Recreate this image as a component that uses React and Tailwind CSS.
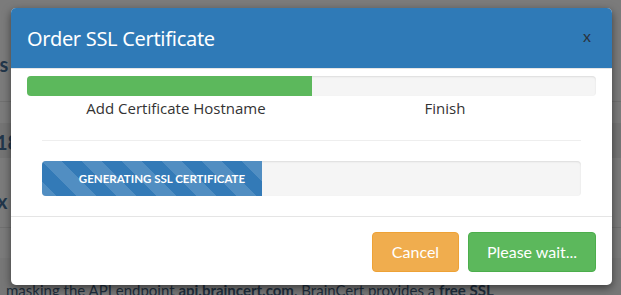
export default function App() {
  return (
    <div className="relative w-[621px] h-[295px] overflow-hidden bg-[#7b7b7b] font-['Lato','Liberation_Sans',sans-serif]">
      {/* page behind the overlay */}
      <div className="flex flex-col text-[#22364a] text-[20px] font-bold leading-none">
        <div className="h-[50px]" />
        <div className="h-[52px] border-b border-[#707070] pt-[4px] -ml-[20px]">ses</div>
        <div className="h-[21px]" />
        <div className="h-[35px] bg-[#747474] pt-[9px] -ml-[4px]">18</div>
        <div className="h-[70px] border-b border-[#707070] pt-[33px] -ml-[8px]">lx</div>
        <div className="h-[30px]" />
        <div className="h-[37px] bg-[#777777] pt-[25px] pl-[6px] text-[15px] font-normal text-[#1e2d3c] whitespace-nowrap">
          masking the API endpoint <b>api.braincert.com</b>. BrainCert provides a <b>free SSL</b>
        </div>
      </div>

      {/* modal */}
      <div className="absolute left-[11px] top-[8px] w-[601px] h-[277px] bg-white rounded-[5px] overflow-hidden shadow-[0_3px_9px_rgba(0,0,0,0.5)] flex flex-col">
        <div className="h-[61px] bg-[#2f7ab7] flex items-center justify-between pl-[16px] pr-[21px] border-b border-[#e5e5e5]">
          <h4 className="text-white text-[20px] leading-none pt-[2px] font-['Noto_Sans','Liberation_Sans',sans-serif] tracking-[-0.3px]">Order SSL Certificate</h4>
          <span className="text-[#2a3440] text-[16px] leading-none -mt-[4px]">x</span>
        </div>

        <div className="flex-1 px-[16px] pt-[7px]">
          <div className="h-[20px] bg-[#f5f5f5] rounded-[4px] overflow-hidden shadow-[inset_0_1px_2px_rgba(0,0,0,0.1)]">
            <div className="h-full w-[50%] bg-[#5cb85c]" />
          </div>
          <div className="flex text-[#333] text-[15px] leading-[22px] mt-[1px] font-['Open_Sans','Liberation_Sans',sans-serif]">
            <div className="w-[298px] text-center">Add Certificate Hostname</div>
            <div className="w-[240px] text-center">Finish</div>
          </div>
          <div className="mx-[15px] mt-[21px] border-t border-[#eeeeee]" />
          <div className="mx-[15px] mt-[20px] h-[35px] bg-[#f5f5f5] rounded-[4px] overflow-hidden shadow-[inset_0_1px_2px_rgba(0,0,0,0.1)]">
            <div className="h-full w-[220px] pl-[20px] bg-[#337ab7] bg-[linear-gradient(45deg,rgba(255,255,255,0.15)_25%,transparent_25%,transparent_50%,rgba(255,255,255,0.15)_50%,rgba(255,255,255,0.15)_75%,transparent_75%,transparent)] bg-[length:40px_40px] flex items-center justify-center text-white text-[11.5px] font-bold">
              GENERATING SSL CERTIFICATE
            </div>
          </div>
        </div>

        <div className="h-[69px] border-t border-[#e5e5e5] flex items-start justify-end gap-[9px] pt-[15px] pr-[16px]">
          <button className="w-[87px] h-[40px] rounded-[4px] bg-[#f0ad4e] border border-[#eea236] text-white text-[16px]">Cancel</button>
          <button className="w-[128px] h-[40px] rounded-[4px] bg-[#5cb85c] border border-[#4cae4c] text-white text-[16px]">Please wait...</button>
        </div>
      </div>
    </div>
  );
}
